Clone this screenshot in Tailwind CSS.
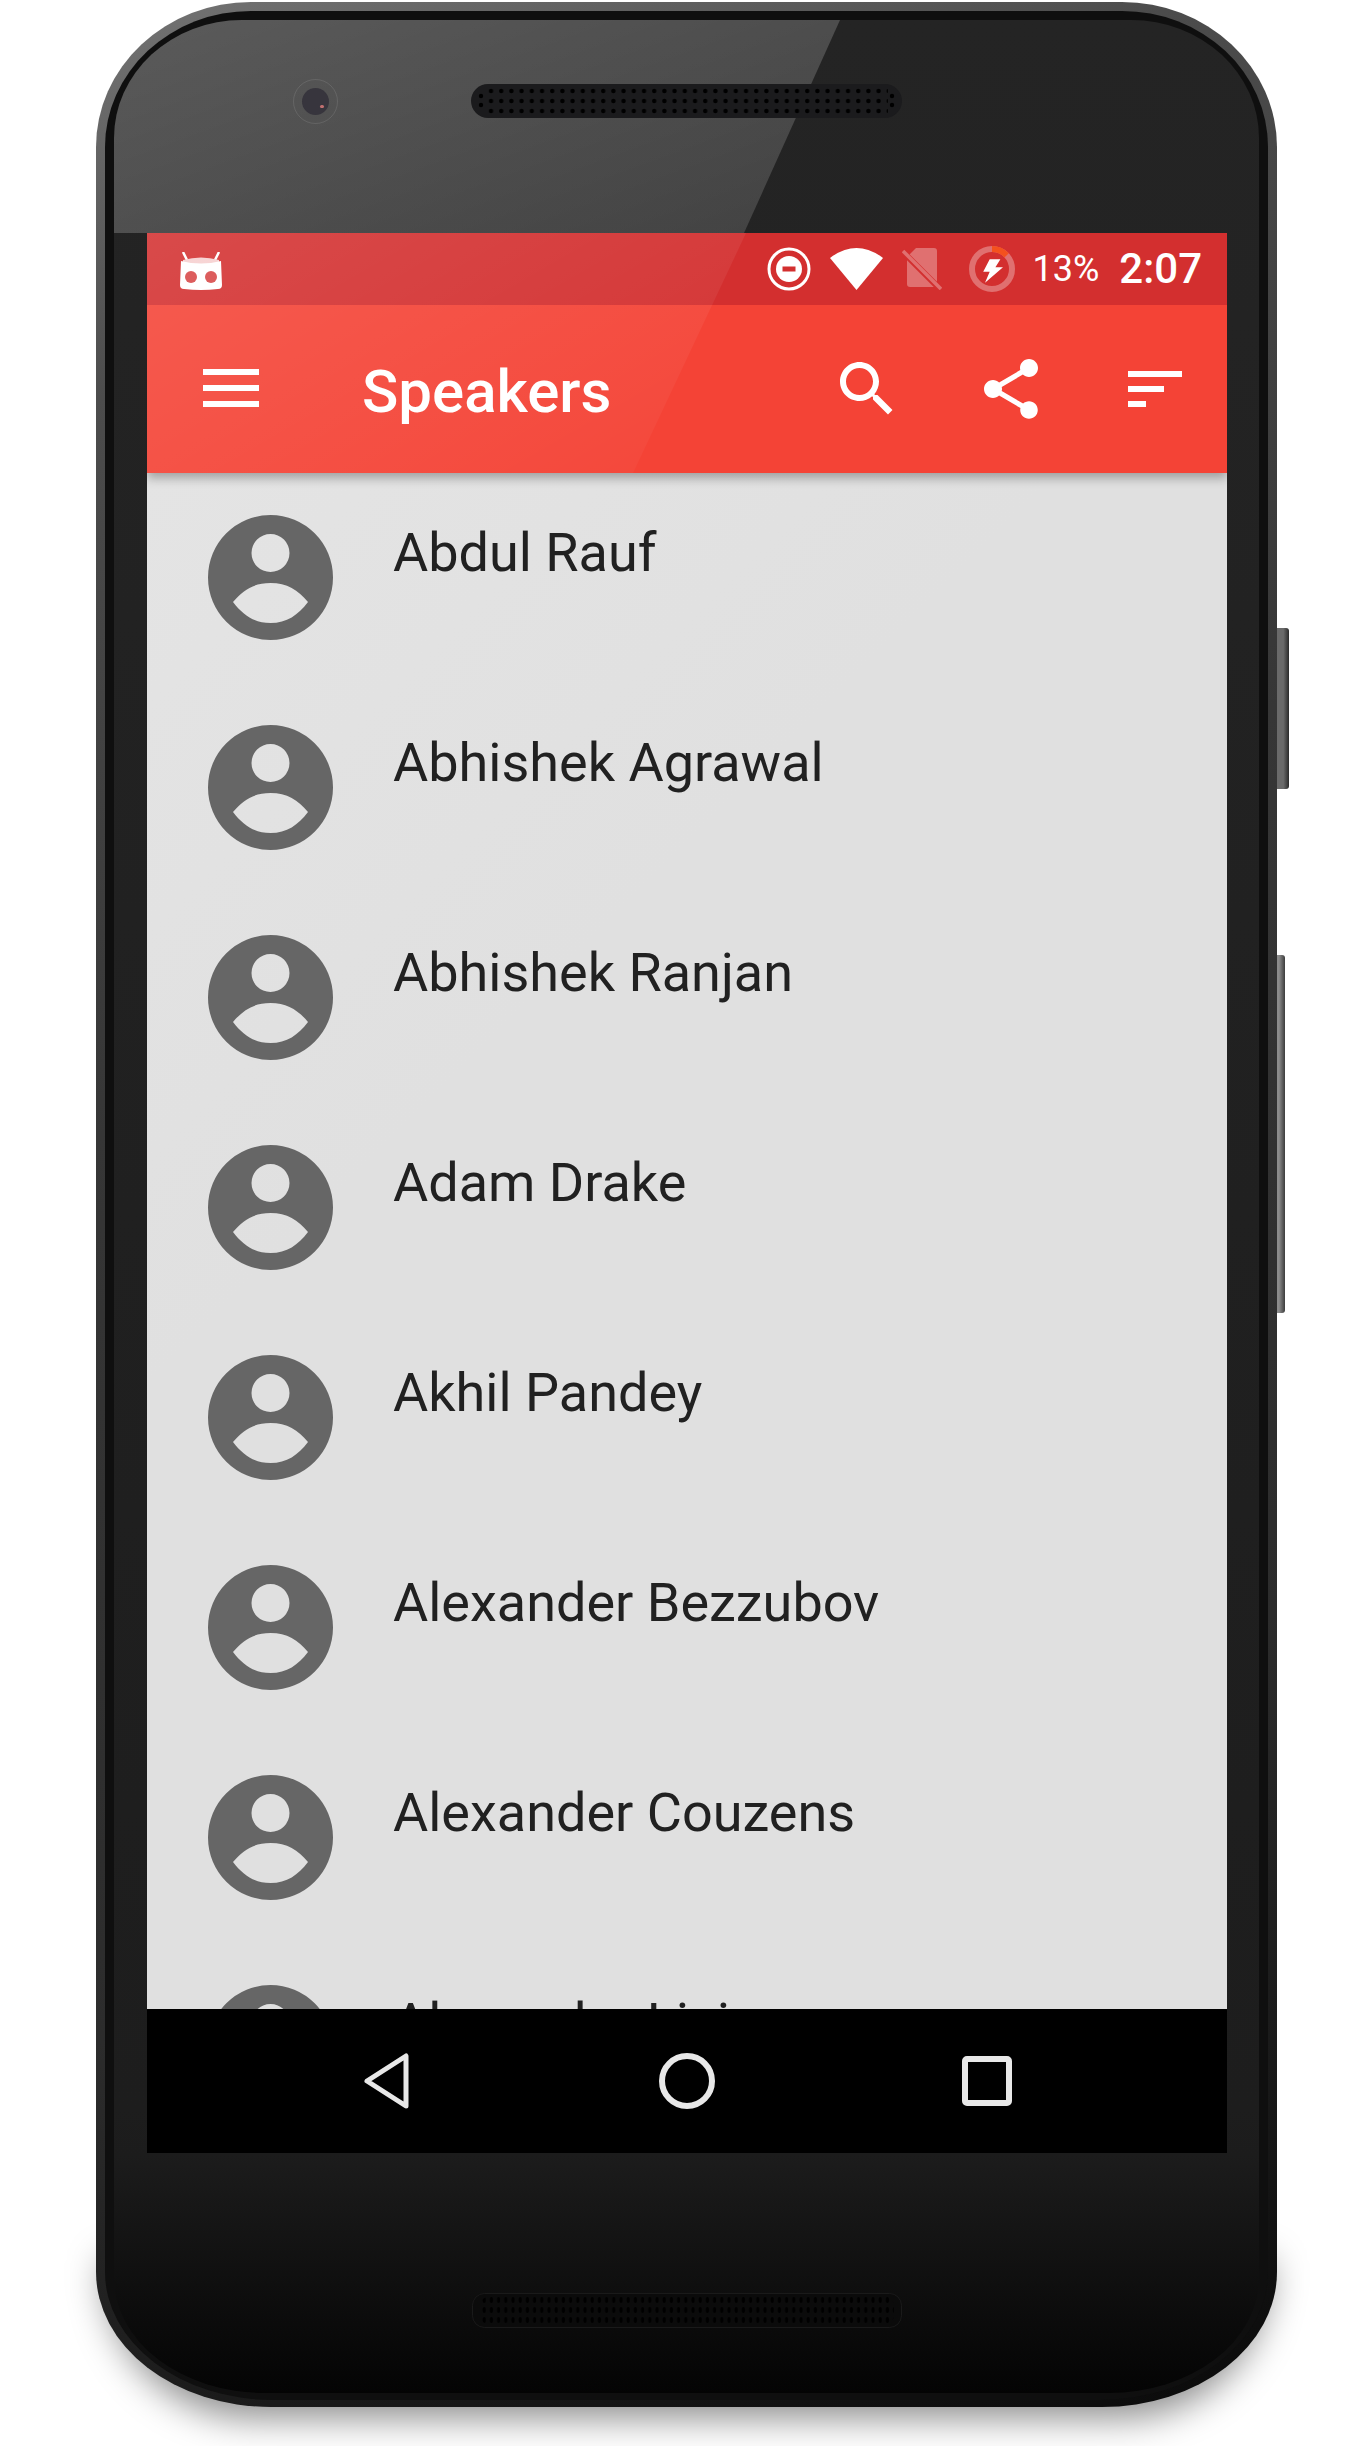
<!DOCTYPE html>
<html lang="en">
<head>
    <meta charset="UTF-8">
    <title>Speakers</title>
    <script src="https://cdn.jsdelivr.net/npm/@tailwindcss/browser@4"></script>
</head>
<body class="bg-white font-['Roboto',sans-serif]">
<div class="relative w-[1370px] h-[2446px] overflow-hidden bg-white pt-[2px] pl-[96px]">

    <!-- floor shadow -->
    <div class="absolute left-[104px] top-[2260px] w-[1166px] h-[158px] rounded-b-[150px] bg-black/45 blur-[18px]"></div>

    <!-- side buttons -->
    <div class="absolute left-[1270px] top-[628px] w-[19px] h-[161px] rounded-r-[3px] bg-[linear-gradient(to_right,#6a6a6a_0%,#6a6a6a_70%,#2a2a2a_100%)]"></div>
    <div class="absolute left-[1270px] top-[955px] w-[15px] h-[358px] rounded-r-[3px] bg-[linear-gradient(to_right,#8c8c8c_0%,#8c8c8c_60%,#3c3c3c_100%)]"></div>

    <!-- phone body -->
    <div class="relative w-[1181px] h-[2405px] p-[9px] pb-[7px] rounded-[155px_155px_175px_175px/145px_145px_135px_135px] bg-[linear-gradient(160deg,#747474_0%,#4c4c4c_14%,#363636_40%,#2c2c2c_72%,#141414_92%,#0a0a0a_100%)]">
        <div class="h-full p-[9px] pb-[7px] rounded-[146px_146px_168px_168px/136px_136px_128px_128px] bg-[#0f0f0f]">
            <div class="flex flex-col h-full overflow-hidden rounded-[128px_128px_150px_150px/118px_118px_115px_115px] bg-[linear-gradient(to_bottom,#242424_0%,#1d1d1d_88%,#1c1c1c_90%,#040404_100%)]">

                <!-- top bezel -->
                <div class="relative flex items-center justify-center h-[213px] shrink-0 pb-[52px]">
                    <div class="absolute inset-0 bg-[linear-gradient(160deg,rgba(255,255,255,.25),rgba(255,255,255,.1))] [clip-path:polygon(0_0,726px_0,630px_213px,0_213px)]"></div>
                    <!-- camera -->
                    <div class="absolute left-[179px] top-[59px] flex items-center justify-center w-[45px] h-[45px] rounded-full border border-white/10">
                        <div class="relative w-[27px] h-[27px] rounded-full bg-[#37353d]">
                            <div class="absolute left-[18px] top-[17px] w-[4px] h-[3px] rounded-full bg-[#c07070]"></div>
                        </div>
                    </div>
                    <!-- speaker -->
                    <svg class="relative" width="431" height="34" viewBox="0 0 431 34">
                        <defs>
                            <pattern id="grille" width="10.2" height="10" patternUnits="userSpaceOnUse" x="15" y="2">
                                <circle cx="5" cy="5" r="2.2" fill="#000"/>
                            </pattern>
                        </defs>
                        <rect width="431" height="34" rx="17" fill="#1b1b1d"/>
                        <rect x="15" y="2" width="402" height="30" fill="url(#grille)"/>
                        <circle cx="10" cy="12" r="2.2" fill="#000"/>
                        <circle cx="10" cy="21" r="2.2" fill="#000"/>
                        <circle cx="421" cy="12" r="2.2" fill="#000"/>
                        <circle cx="421" cy="21" r="2.2" fill="#000"/>
                    </svg>
                </div>

                <!-- screen -->
                <div class="flex flex-col w-[1080px] h-[1920px] shrink-0 ml-[33px] bg-[#e0e0e0] overflow-hidden">

                    <div class="relative z-10 shrink-0 shadow-[0_5px_10px_rgba(0,0,0,.3)]">
                        <!-- status bar -->
                        <div class="flex items-center h-[72px] pl-[33px] pr-[25px] bg-[#d32f2f] text-white">
                            <svg class="mt-[3px]" width="42" height="38" viewBox="0 0 42 38">
                                <path d="M3 0 L7 8 M39 0 L35 8" stroke="#fff" stroke-width="2.5" fill="none"/>
                                <path d="M3 8 Q21 3 39 8 L39 14 L3 14Z" fill="#f6cfcf"/>
                                <path d="M1 9 Q21 14 41 9 L42 33 Q42 37 38 37 Q21 39 4 37 Q0 37 0 33Z" fill="#fff"/>
                                <circle cx="11" cy="25" r="6" fill="#d84848"/>
                                <circle cx="31" cy="25" r="6" fill="#d84848"/>
                            </svg>
                            <svg class="ml-auto" width="44" height="44" viewBox="0 0 44 44">
                                <circle cx="22" cy="22" r="20" fill="none" stroke="#fff" stroke-width="3"/>
                                <circle cx="22" cy="22" r="13" fill="#fff"/>
                                <rect x="15.5" y="19.5" width="13" height="5" fill="#d32f2f"/>
                            </svg>
                            <svg class="ml-[19px]" width="53" height="42" viewBox="0 0 53 42">
                                <path d="M0 10 Q26.5 -10 53 10 L26.5 42Z" fill="#fff"/>
                            </svg>
                            <svg class="ml-[19px]" width="40" height="42" viewBox="0 0 40 42">
                                <path d="M14 0 L32 0 Q35 0 35 3 L35 36 Q35 39 32 39 L8 39 Q5 39 5 36 L5 9Z" fill="#e07070"/>
                                <path d="M0 3 L38 41" stroke="#d32f2f" stroke-width="6"/>
                                <path d="M1 3 L39 41" stroke="#e07070" stroke-width="3.5"/>
                            </svg>
                            <svg class="ml-[27px]" width="46" height="46" viewBox="0 0 46 46">
                                <circle cx="23" cy="23" r="20" fill="none" stroke="#e07070" stroke-width="6"/>
                                <circle cx="23" cy="23" r="20" fill="none" stroke="#f4511e" stroke-width="6" stroke-dasharray="16.3 200" transform="rotate(-90 23 23)"/>
                                <polygon points="20.7,13.3 31.4,13.3 26.4,21.3 34,21.3 16,36.7 20.7,25.7 14.2,25.7" fill="#fff"/>
                            </svg>
                            <span class="ml-[17px] text-[36px] leading-none">13%</span>
                            <span class="ml-[20px] text-[42px] leading-none font-medium">2:07</span>
                        </div>
                        <!-- toolbar -->
                        <div class="flex items-center h-[168px] pl-[56px] pr-[36px] bg-[#f44336] text-white">
                            <div class="flex flex-col gap-[10px] w-[56px] mb-[2px]">
                                <div class="h-[6px] bg-white"></div>
                                <div class="h-[6px] bg-white"></div>
                                <div class="h-[6px] bg-white"></div>
                            </div>
                            <h1 class="ml-[103px] pt-[5px] text-[60px] leading-none font-medium">Speakers</h1>
                            <svg class="ml-auto fill-white" width="72" height="72" viewBox="0 0 24 24"><path d="M15.5 14h-.79l-.28-.27C15.41 12.59 16 11.11 16 9.5 16 5.91 13.09 3 9.5 3S3 5.91 3 9.5 5.91 16 9.5 16c1.61 0 3.09-.59 4.23-1.57l.27.28v.79l5 4.99L20.49 19l-4.99-5zm-6 0C7.01 14 5 11.99 5 9.5S7.01 5 9.5 5 14 7.01 14 9.5 11.99 14 9.5 14z"/></svg>
                            <svg class="ml-[72px] fill-white" width="72" height="72" viewBox="0 0 24 24"><path d="M18 16.08c-.76 0-1.44.3-1.96.77L8.91 12.7c.05-.23.09-.46.09-.7s-.04-.47-.09-.7l7.05-4.11c.54.5 1.25.81 2.04.81 1.66 0 3-1.34 3-3s-1.34-3-3-3-3 1.34-3 3c0 .24.04.47.09.7L8.04 9.81C7.5 9.31 6.79 9 6 9c-1.66 0-3 1.34-3 3s1.34 3 3 3c.79 0 1.5-.31 2.04-.81l7.12 4.16c-.05.21-.08.43-.08.65 0 1.61 1.31 2.92 2.92 2.92s2.92-1.31 2.92-2.92-1.31-2.92-2.92-2.92z"/></svg>
                            <svg class="ml-[72px] fill-white" width="72" height="72" viewBox="0 0 24 24"><path d="M3 18h6v-2H3v2zM3 6v2h18V6H3zm0 7h12v-2H3v2z"/></svg>
                        </div>
                        <!-- glare over the header -->
                        <div class="absolute inset-0 bg-[linear-gradient(150deg,rgba(255,255,255,.13)_0%,rgba(255,255,255,.03)_60%,rgba(255,255,255,.03)_100%)] [clip-path:polygon(0_0,599px_0,486px_240px,0_240px)]"></div>
                    </div>

                    <!-- speaker list -->
                    <ul class="flex-1 min-h-0 overflow-hidden pl-[61px] pt-[42px] text-[#212121] text-[54px] leading-none bg-[linear-gradient(135deg,#e4e4e4,#e0e0e0_35%)]">
                        <li class="flex items-start h-[210px]">
                            <svg width="125" height="125" viewBox="0 0 125 125"><path fill="#666" fill-rule="evenodd" d="M62.5 0a62.5 62.5 0 1 0 0 125a62.5 62.5 0 1 0 0-125zM62.5 19a19 19 0 1 1 0 38a19 19 0 1 1 0-38zM25 87C35 75 46 68 62.5 68S90 75 100 87C90 100 79 108 62.5 108S35 100 25 87z"/></svg>
                            <span class="ml-[60px] mt-[11px]">Abdul Rauf</span>
                        </li>
                        <li class="flex items-start h-[210px]">
                            <svg width="125" height="125" viewBox="0 0 125 125"><path fill="#666" fill-rule="evenodd" d="M62.5 0a62.5 62.5 0 1 0 0 125a62.5 62.5 0 1 0 0-125zM62.5 19a19 19 0 1 1 0 38a19 19 0 1 1 0-38zM25 87C35 75 46 68 62.5 68S90 75 100 87C90 100 79 108 62.5 108S35 100 25 87z"/></svg>
                            <span class="ml-[60px] mt-[11px]">Abhishek Agrawal</span>
                        </li>
                        <li class="flex items-start h-[210px]">
                            <svg width="125" height="125" viewBox="0 0 125 125"><path fill="#666" fill-rule="evenodd" d="M62.5 0a62.5 62.5 0 1 0 0 125a62.5 62.5 0 1 0 0-125zM62.5 19a19 19 0 1 1 0 38a19 19 0 1 1 0-38zM25 87C35 75 46 68 62.5 68S90 75 100 87C90 100 79 108 62.5 108S35 100 25 87z"/></svg>
                            <span class="ml-[60px] mt-[11px]">Abhishek Ranjan</span>
                        </li>
                        <li class="flex items-start h-[210px]">
                            <svg width="125" height="125" viewBox="0 0 125 125"><path fill="#666" fill-rule="evenodd" d="M62.5 0a62.5 62.5 0 1 0 0 125a62.5 62.5 0 1 0 0-125zM62.5 19a19 19 0 1 1 0 38a19 19 0 1 1 0-38zM25 87C35 75 46 68 62.5 68S90 75 100 87C90 100 79 108 62.5 108S35 100 25 87z"/></svg>
                            <span class="ml-[60px] mt-[11px]">Adam Drake</span>
                        </li>
                        <li class="flex items-start h-[210px]">
                            <svg width="125" height="125" viewBox="0 0 125 125"><path fill="#666" fill-rule="evenodd" d="M62.5 0a62.5 62.5 0 1 0 0 125a62.5 62.5 0 1 0 0-125zM62.5 19a19 19 0 1 1 0 38a19 19 0 1 1 0-38zM25 87C35 75 46 68 62.5 68S90 75 100 87C90 100 79 108 62.5 108S35 100 25 87z"/></svg>
                            <span class="ml-[60px] mt-[11px]">Akhil Pandey</span>
                        </li>
                        <li class="flex items-start h-[210px]">
                            <svg width="125" height="125" viewBox="0 0 125 125"><path fill="#666" fill-rule="evenodd" d="M62.5 0a62.5 62.5 0 1 0 0 125a62.5 62.5 0 1 0 0-125zM62.5 19a19 19 0 1 1 0 38a19 19 0 1 1 0-38zM25 87C35 75 46 68 62.5 68S90 75 100 87C90 100 79 108 62.5 108S35 100 25 87z"/></svg>
                            <span class="ml-[60px] mt-[11px]">Alexander Bezzubov</span>
                        </li>
                        <li class="flex items-start h-[210px]">
                            <svg width="125" height="125" viewBox="0 0 125 125"><path fill="#666" fill-rule="evenodd" d="M62.5 0a62.5 62.5 0 1 0 0 125a62.5 62.5 0 1 0 0-125zM62.5 19a19 19 0 1 1 0 38a19 19 0 1 1 0-38zM25 87C35 75 46 68 62.5 68S90 75 100 87C90 100 79 108 62.5 108S35 100 25 87z"/></svg>
                            <span class="ml-[60px] mt-[11px]">Alexander Couzens</span>
                        </li>
                        <li class="flex items-start h-[210px]">
                            <svg width="125" height="125" viewBox="0 0 125 125"><path fill="#666" fill-rule="evenodd" d="M62.5 0a62.5 62.5 0 1 0 0 125a62.5 62.5 0 1 0 0-125zM62.5 19a19 19 0 1 1 0 38a19 19 0 1 1 0-38zM25 87C35 75 46 68 62.5 68S90 75 100 87C90 100 79 108 62.5 108S35 100 25 87z"/></svg>
                            <span class="ml-[60px] mt-[11px]">Alexander Lisianoy</span>
                        </li>
                    </ul>

                    <!-- nav bar -->
                    <div class="flex items-center justify-center h-[144px] shrink-0 bg-black">
                        <div class="flex justify-center w-[300px]">
                            <svg class="mr-[4px]" width="56" height="60" viewBox="0 0 56 60"><polygon points="49,5 49,55 10,30" fill="none" stroke="#e8e8e8" stroke-width="5" stroke-linejoin="round"/></svg>
                        </div>
                        <div class="flex justify-center w-[300px]">
                            <svg width="56" height="56" viewBox="0 0 56 56"><circle cx="28" cy="28" r="25" fill="none" stroke="#e8e8e8" stroke-width="6"/></svg>
                        </div>
                        <div class="flex justify-center w-[300px]">
                            <svg width="50" height="50" viewBox="0 0 50 50"><rect x="3" y="3" width="44" height="44" rx="2" fill="none" stroke="#e8e8e8" stroke-width="6"/></svg>
                        </div>
                    </div>
                </div>

                <!-- bottom bezel -->
                <div class="flex justify-center flex-1 pt-[140px]">
                    <svg width="430" height="35" viewBox="0 0 430 35">
                        <defs>
                            <pattern id="grille2" width="7.2" height="10" patternUnits="userSpaceOnUse" x="2" y="2">
                                <ellipse cx="3" cy="5" rx="1.6" ry="3" fill="#000"/>
                            </pattern>
                        </defs>
                        <rect x=".5" y=".5" width="429" height="34" rx="12" fill="#0b0b0b" stroke="#1a1a1a"/>
                        <rect x="8" y="3" width="414" height="29" rx="10" fill="url(#grille2)"/>
                    </svg>
                </div>
            </div>
        </div>
    </div>
</div>
</body>
</html>
